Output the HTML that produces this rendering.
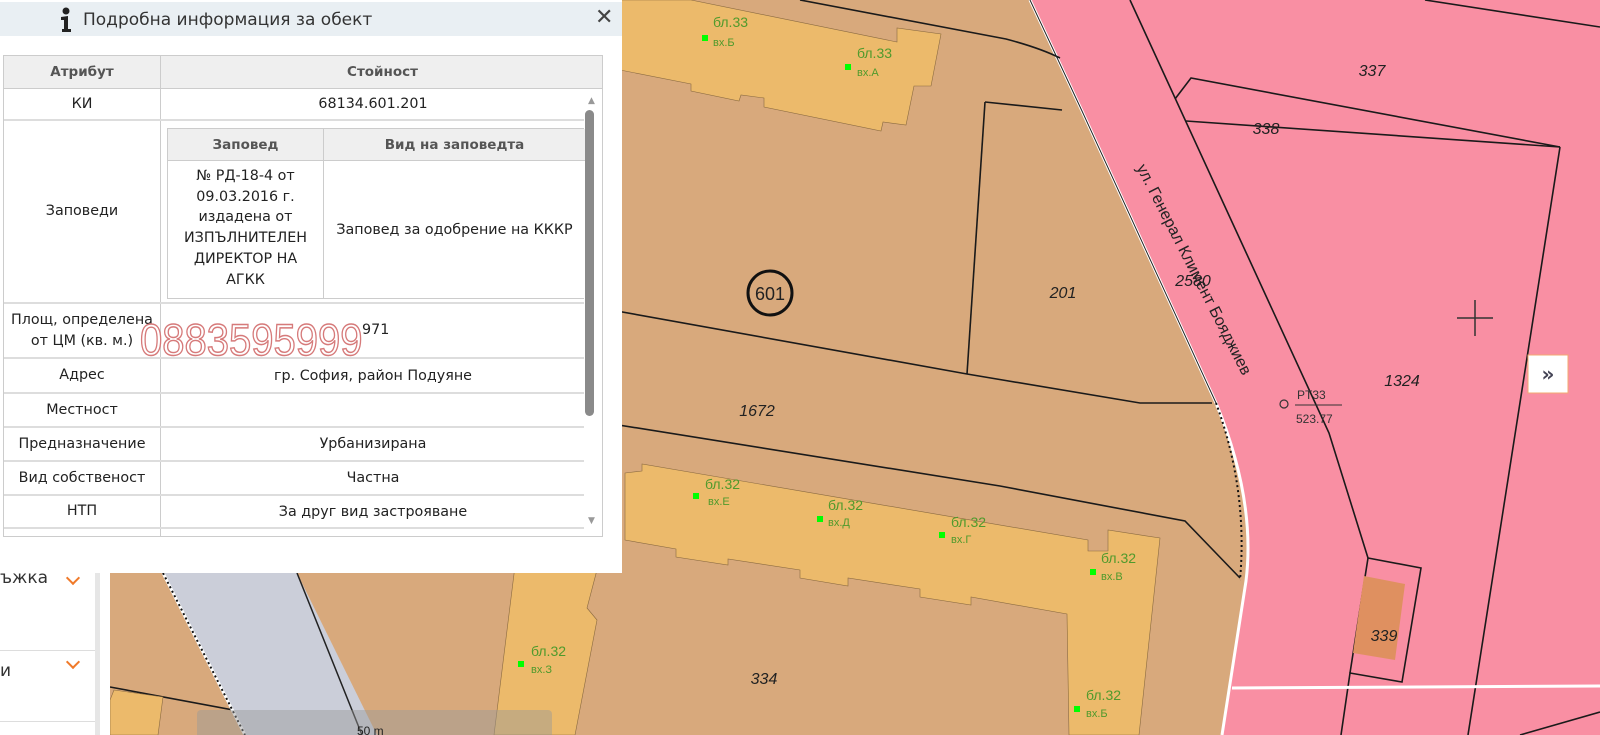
<!DOCTYPE html>
<html><head><meta charset="utf-8"><style>
*{margin:0;padding:0;box-sizing:border-box}
body{width:1600px;height:735px;overflow:hidden;position:relative;background:#fff;font-family:"DejaVu Sans","Liberation Sans",sans-serif;}
#map{position:absolute;left:0;top:0}
.panel{position:absolute;left:0;top:0;width:622px;height:573px;background:#fff;}
.hdr{position:absolute;left:0;top:2px;width:622px;height:34px;background:#e9eff3;}
.hdr .t{position:absolute;left:83px;top:8px;font-size:17px;color:#333;}
.hdr .x{position:absolute;left:595px;top:3px;font-size:22px;color:#444;font-weight:bold;font-family:"DejaVu Sans",sans-serif}
.tbl{position:absolute;left:3px;top:55px;width:600px;height:482px;border:1px solid #ccc;overflow:hidden;font-size:14.3px;color:#222}
.th{position:absolute;top:0;height:33px;background:#efefef;font-weight:bold;color:#555;font-size:13.5px;text-align:center;line-height:33px;border-bottom:1px solid #ccc}
.row{position:absolute;left:0;width:580px;border-bottom:2px solid #ddd}
.c1{position:absolute;left:0;width:157px;text-align:center;border-right:1px solid #ccc;height:100%;display:flex;align-items:center;justify-content:center;line-height:21px;white-space:nowrap}
.c2{position:absolute;left:158px;width:422px;height:100%;display:flex;align-items:center;justify-content:center;text-align:center}
.sb{position:absolute;left:585px;top:110px;width:9px;height:306px;background:#8a8a8a;border-radius:5px}
.side{position:absolute;left:0;top:573px;width:95px;height:162px;background:#fff;font-size:17px;color:#333}
.chev{position:absolute;width:10px;height:10px;border-right:2.5px solid #f07a2a;border-bottom:2.5px solid #f07a2a;transform:rotate(45deg)}
.g{fill:#4f9a2c;font-family:"Liberation Sans",sans-serif}
.lb{font-family:"Liberation Sans",sans-serif;font-style:italic;font-size:16px;fill:#222}
</style></head><body>
<svg id="map" width="1600" height="735" viewBox="0 0 1600 735">
<rect width="1600" height="735" fill="#d8a97c"/>
<path d="M1030,0 L1600,0 L1600,735 L1222,735 L1246,581 Q1256,500 1216,403 L1082,111 Z" fill="#f98fa3"/>
<path d="M1030,0 L1082,111 L1216,403 Q1256,500 1246,581 L1222,735" fill="none" stroke="#fff" stroke-width="3"/>
<path d="M1030,0 L1082,111 L1216,403" fill="none" stroke="#222" stroke-width="1"/>
<path d="M1216,403 Q1248,490 1240,580" fill="none" stroke="#111" stroke-width="2" stroke-dasharray="2,3"/>
<path d="M600,0 L691,0 L897,42 L897,28 L941,34 L931,86 L914,86 L906,125 L883,122 L881,131 L764,107 L764,98 L741,95 L739,101 L691,91 L691,84 L600,66 Z" fill="#ecba6b" stroke="#8a6a40" stroke-width="0.6"/>
<g fill="none" stroke="#1a1a1a" stroke-width="1.6">
<path d="M800,0 L1006,39 Q1040,48 1060,58"/>
<path d="M985,102 L1062,110"/>
<path d="M985,102 L967,374"/>
<path d="M600,308 L967,374 L1140,403 L1212,403"/>
<path d="M600,422 L1000,486 L1185,521 L1240,578"/>
<path d="M1130,0 L1329,433 L1368,558"/>
<path d="M1175,99 L1191,78 L1560,147"/>
<path d="M1186,121 L1560,147"/>
<path d="M1425,0 L1600,27"/>
<path d="M1560,147 L1468,735"/>
<path d="M1368,558 L1421,568 L1402,682 L1350,673 L1341,735"/>
<path d="M1350,673 L1368,558"/>
<path d="M1520,735 L1600,712"/>
<path d="M110,687 L233,710 L245,735"/>
</g>
<path d="M1364,576 L1405,584 L1395,660 L1353,653 Z" fill="#df9060"/>
<path d="M1232,688 L1600,686" stroke="#fff" stroke-width="3"/>
<path d="M625,473 L642,471 L642,464 L1088,540 L1088,551 L1108,551 L1108,530 L1160,538 L1139,735 L1069,735 L1067,614 L971,597 L971,605 L920,597 L920,589 L848,578 L848,586 L800,578 L800,570 L728,559 L728,565 L676,557 L676,549 L625,540 Z" fill="#ecba6b" stroke="#8a6a40" stroke-width="0.6"/>
<path d="M515,566 L598,566 L587,608 L597,620 L575,735 L494,735 Z" fill="#ecba6b" stroke="#8a6a40" stroke-width="0.6"/>
<path d="M114,690 L163,697 L158,735 L110,735 L110,700 Z" fill="#ecba6b" stroke="#8a6a40" stroke-width="0.6"/>
<path d="M163,573 L297,573 L377,735 L245,735 Z" fill="#cbced9"/>
<path d="M163,573 L245,735" stroke="#fff" stroke-width="3"/>
<path d="M163,573 L245,735" stroke="#111" stroke-width="2" stroke-dasharray="2,3"/>
<path d="M297,573 L362,735" stroke="#222" stroke-width="1.5"/>
<rect x="197" y="710" width="355" height="30" rx="4" fill="#9a9a9a" opacity="0.45"/>
<text x="357" y="735" font-size="12" font-family="Liberation Sans" fill="#222">50 m</text>
<circle cx="770" cy="293" r="22" fill="none" stroke="#111" stroke-width="3"/>
<text x="770" y="300" font-size="18" text-anchor="middle" font-family="Liberation Sans" fill="#222">601</text>
<text class="lb" x="1372" y="76" text-anchor="middle">337</text>
<text class="lb" x="1266" y="134" text-anchor="middle">338</text>
<text class="lb" x="1063" y="298" text-anchor="middle">201</text>
<text class="lb" x="1402" y="386" text-anchor="middle">1324</text>
<text class="lb" x="1384" y="641" text-anchor="middle">339</text>
<text class="lb" x="757" y="416" text-anchor="middle">1672</text>
<text class="lb" x="764" y="684" text-anchor="middle">334</text>
<text class="lb" x="1193" y="286" text-anchor="middle">2580</text>
<text x="1193" y="274" font-size="16" font-family="Liberation Sans" fill="#222" text-anchor="middle" transform="rotate(63 1193 270)">ул. Генерал Климент Бояджиев</text>
<path d="M1457,318 L1493,318 M1475,300 L1475,336" stroke="#333" stroke-width="1.5"/>
<circle cx="1284" cy="404" r="4" fill="none" stroke="#333" stroke-width="1.2"/>
<text x="1297" y="399" font-size="12" font-family="Liberation Sans" fill="#333">PT33</text>
<path d="M1295,405 L1342,405" stroke="#333"/>
<text x="1296" y="423" font-size="12" font-family="Liberation Sans" fill="#333">523.77</text>
<g>
<text class="g" x="713" y="27" font-size="14">бл.33</text><text class="g" x="713" y="46" font-size="11">вх.Б</text><rect x="702" y="35" width="6" height="6" fill="#0f0"/>
<text class="g" x="857" y="58" font-size="14">бл.33</text><text class="g" x="857" y="76" font-size="11">вх.А</text><rect x="845" y="64" width="6" height="6" fill="#0f0"/>
<text class="g" x="705" y="489" font-size="14">бл.32</text><text class="g" x="708" y="505" font-size="11">вх.Е</text><rect x="693" y="493" width="6" height="6" fill="#0f0"/>
<text class="g" x="828" y="510" font-size="14">бл.32</text><text class="g" x="828" y="526" font-size="11">вх.Д</text><rect x="817" y="516" width="6" height="6" fill="#0f0"/>
<text class="g" x="951" y="527" font-size="14">бл.32</text><text class="g" x="951" y="543" font-size="11">вх.Г</text><rect x="939" y="532" width="6" height="6" fill="#0f0"/>
<text class="g" x="1101" y="563" font-size="14">бл.32</text><text class="g" x="1101" y="580" font-size="11">вх.В</text><rect x="1090" y="569" width="6" height="6" fill="#0f0"/>
<text class="g" x="531" y="656" font-size="14">бл.32</text><text class="g" x="531" y="673" font-size="11">вх.З</text><rect x="518" y="661" width="6" height="6" fill="#0f0"/>
<text class="g" x="1086" y="700" font-size="14">бл.32</text><text class="g" x="1086" y="717" font-size="11">вх.Б</text><rect x="1074" y="706" width="6" height="6" fill="#0f0"/>
</g>
<rect x="1528" y="355" width="40" height="38" fill="#fff" stroke="#f3a970" stroke-width="1"/>
<text x="1548" y="381" font-size="20" font-weight="bold" text-anchor="middle" font-family="DejaVu Sans" fill="#445">»</text>
</svg>

<div class="side">
<div style="position:absolute;left:0;top:-5px">ъжка</div>
<div class="chev" style="left:68px;top:0px"></div>
<div style="position:absolute;left:0;top:77px;width:95px;border-top:1px solid #ddd"></div>
<div style="position:absolute;left:0;top:88px">и</div>
<div class="chev" style="left:68px;top:84px"></div>
<div style="position:absolute;left:0;top:148px;width:95px;border-top:1px solid #ddd"></div>
<div style="position:absolute;left:95px;top:0;width:5px;height:162px;background:#e6e6e6"></div>
<div style="position:absolute;left:100px;top:0;width:10px;height:162px;background:#fff"></div>
</div>

<div class="panel">
<div class="hdr">
<svg style="position:absolute;left:58px;top:5px" width="16" height="26" viewBox="0 0 16 26"><circle cx="8" cy="4" r="3.5" fill="#222"/><path d="M3,10 L10,9 L10,22 L13,22 L13,25 L4,25 L4,22 L6,22 L6,13 L3,13 Z" fill="#222"/></svg>
<div class="t">Подробна информация за обект</div>
<div class="x">✕</div>
</div>
<div class="tbl">
<div class="th" style="left:0;width:157px;border-right:1px solid #ccc">Атрибут</div>
<div class="th" style="left:157px;width:443px">Стойност</div>
<div class="row" style="top:33px;height:32px"><div class="c1">КИ</div><div class="c2">68134.601.201</div></div>
<div class="row" style="top:65px;height:183px"><div class="c1">Заповеди</div><div class="c2" style="display:block">
 <div style="position:absolute;left:5px;top:7px;width:417px;height:171px;border:1px solid #ccc;border-right:none">
  <div style="position:absolute;left:0;top:0;width:156px;height:32px;background:#efefef;border-right:1px solid #ccc;border-bottom:1px solid #ccc;font-weight:bold;color:#555;font-size:13.5px;line-height:32px">Заповед</div>
  <div style="position:absolute;left:156px;top:0;width:261px;height:32px;background:#efefef;border-bottom:1px solid #ccc;font-weight:bold;color:#555;font-size:13.5px;line-height:32px">Вид на заповедта</div>
  <div style="position:absolute;left:0;top:32px;width:156px;height:138px;border-right:1px solid #ccc;line-height:20.7px;padding-top:5px;white-space:nowrap">№ РД-18-4 от<br>09.03.2016 г.<br>издадена от<br>ИЗПЪЛНИТЕЛЕН<br>ДИРЕКТОР НА<br>АГКК</div>
  <div style="position:absolute;left:156px;top:32px;width:261px;height:138px;display:flex;align-items:center;justify-content:center;white-space:nowrap">Заповед за одобрение на КККР</div>
 </div></div></div>
<div class="row" style="top:248px;height:55px"><div class="c1">Площ, определена<br>от ЦМ (кв. м.)</div><div class="c2" style="display:block"><span style="position:absolute;left:200px;top:18px">971</span></div></div>
<div class="row" style="top:303px;height:35px"><div class="c1">Адрес</div><div class="c2">гр. София, район Подуяне</div></div>
<div class="row" style="top:338px;height:34px"><div class="c1">Местност</div><div class="c2"></div></div>
<div class="row" style="top:372px;height:34px"><div class="c1">Предназначение</div><div class="c2">Урбанизирана</div></div>
<div class="row" style="top:406px;height:34px"><div class="c1">Вид собственост</div><div class="c2">Частна</div></div>
<div class="row" style="top:440px;height:33px"><div class="c1">НТП</div><div class="c2">За друг вид застрояване</div></div>
<div class="row" style="top:473px;height:20px;border:none"><div class="c1"></div></div>
<div style="position:absolute;left:584px;top:40px;font-size:9px;color:#999">▲</div>
<div style="position:absolute;left:584px;top:460px;font-size:9px;color:#999">▼</div>
</div>
<div class="sb"></div>
<div style="position:absolute;left:140px;top:316px;font-family:'Liberation Sans',sans-serif;font-size:40px;color:rgba(255,255,255,0.1);-webkit-text-stroke:1.3px #d67a7a;transform:scaleY(1.12);transform-origin:left top">0883595999</div>
</div>
</body></html>
